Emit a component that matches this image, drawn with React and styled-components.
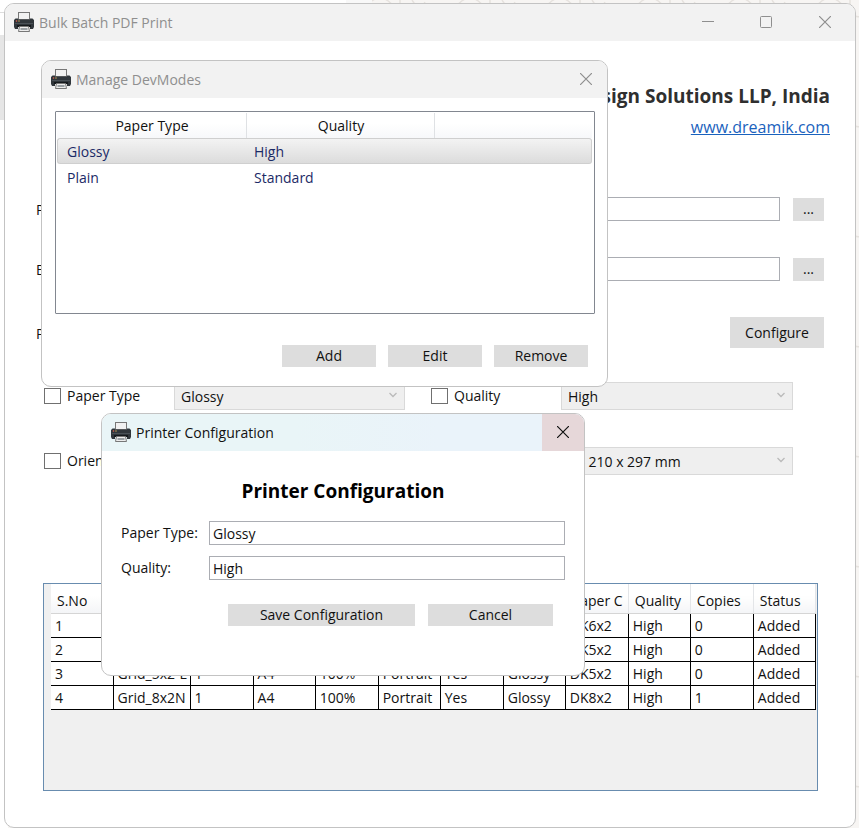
import React from 'react';
import styled, { createGlobalStyle, css } from 'styled-components';

const GlobalStyle = createGlobalStyle`
  * { box-sizing: border-box; }
  html, body, #root { height: 100%; }
  body {
    margin: 0;
    overflow: hidden;
    background: #f7f5f3;
    color: #111;
    font-family: "Segoe UI", "Open Sans", "Noto Sans", sans-serif;
    font-size: 14px;
    line-height: 20px;
  }
  button, input, select { font: inherit; color: inherit; margin: 0; }
`;

const Desktop = styled.div`
  position: relative;
  min-height: 100%;
  padding: 3px 3px 0 4px;
  display: flex;
`;

const Backdrop = styled.svg`
  position: absolute;
  inset: 0;
  width: 100%;
  height: 100%;
`;

const windowFrame = css`
  display: flex;
  flex-direction: column;
  background: #fff;
  border: 1px solid #c3c3c3;
  overflow: hidden;
`;

const MainWindow = styled.main`
  ${windowFrame}
  position: relative;
  flex: 1;
  border-radius: 10px;
`;

const Dialog = styled.section`
  ${windowFrame}
  position: absolute;
  left: ${p => p.$x}px;
  top: ${p => p.$y}px;
  width: ${p => p.$w}px;
  border-radius: 10px;
`;

const TitleBar = styled.header`
  display: flex;
  align-items: stretch;
  height: 37px;
  flex: none;
  padding-left: 9px;
  gap: 5px;
  color: ${p => (p.$active ? '#111' : '#8f8f8f')};
  background: ${p => (p.$active ? 'linear-gradient(90deg, #e9f5f7 40%, #eaf3fa 70%)' : '#f2f2f2')};
`;

const WindowTitle = styled.span`
  flex: 1;
  align-self: center;
  white-space: nowrap;
`;

const CaptionButton = styled.button`
  display: grid;
  place-items: center;
  width: ${p => p.$w || 42}px;
  padding: 0 0 2px;
  border: 0;
  background: ${p => (p.$hot ? '#e6d7d9' : 'transparent')};
`;

const PrinterSvg = styled.svg`
  align-self: center;
  flex: none;
  margin-bottom: 2px;
`;

const Content = styled.div`
  display: flex;
  flex-direction: column;
  flex: 1;
  padding: 41px 31px 36px 38px;
`;

const Masthead = styled.div`
  display: flex;
  flex-direction: column;
  align-items: flex-end;
  margin-right: -6px;
  padding-bottom: 53px;
`;

const Company = styled.h1`
  margin: 0;
  font-size: 19px;
  line-height: 28px;
  color: #2f2f2f;
`;

const SiteLink = styled.a`
  font-size: 16px;
  line-height: 34px;
  color: #1a62bd;
`;

const FileRow = styled.div`
  display: grid;
  grid-template-columns: 112px 1fr 31px;
  column-gap: 13px;
  align-items: center;
  height: 24px;
  margin-bottom: 36px;
  white-space: nowrap;
`;

const RowLabel = styled.label`
  margin-left: -7px;
  padding-top: 2px;
`;

const PrinterRow = styled.div`
  display: flex;
  justify-content: space-between;
  align-items: center;
  height: 31px;
  margin-bottom: 34px;
`;

const TextBox = styled.input`
  width: 100%;
  height: 24px;
  padding: 0 3px;
  border: 1px solid #abadb3;
  background: #fff;
`;

const Button = styled.button`
  min-width: ${p => p.$w}px;
  height: ${p => p.$h || 22}px;
  padding: 0;
  border: 0;
  line-height: 20px;
  background: #dddddd;
`;

const Options = styled.div`
  display: grid;
  grid-template-columns: 130px 231fr 26px 130px 232fr;
  row-gap: 37px;
  margin: 0 31px 108px 1px;
`;

const Check = styled.label`
  display: flex;
  align-items: center;
  gap: 6px;
  height: 28px;
  white-space: nowrap;
  grid-column: ${p => p.$col};

  input {
    appearance: none;
    width: 17px;
    height: 16px;
    border: 1px solid #707070;
    background: #fff;
  }
`;

const Combo = styled.span`
  display: grid;
  align-items: center;
  height: 28px;

  select, svg { grid-area: 1 / 1; }
  select {
    appearance: none;
    width: 100%;
    height: 28px;
    padding: 2px 24px 0 6px;
    border: 1px solid #d9d9d9;
    border-radius: 0;
    background: #efefef;
    opacity: 1;
  }
  svg { justify-self: end; margin: 0 8px 2px 0; pointer-events: none; }
`;

const GridFrame = styled.div`
  height: 208px;
  margin-right: 6px;
  padding: 0 1px 0 7px;
  border: 1px solid #688caf;
  background: #f0f0f0;
`;

const JobTable = styled.table`
  width: 100%;
  table-layout: fixed;
  border-collapse: collapse;
  background: #fff;
  white-space: nowrap;

  th {
    height: 29px;
    padding: 6px 0 0 6px;
    font-weight: 400;
    text-align: left;
    overflow: hidden;
    border-right: 1px solid #e3e5e8;
    border-bottom: 1px solid #d5d5d5;
    background: linear-gradient(#fff 40%, #f4f5f7);
  }
  td {
    height: 24px;
    padding: 2px 0 0 4px;
    overflow: hidden;
    border-right: 1px solid #000;
    border-bottom: 1px solid #000;
    line-height: 20px;
  }
`;

const DevBody = styled.div`
  display: flex;
  flex-direction: column;
  padding: 13px 12px 19px 13px;
`;

const DevList = styled.div`
  height: 203px;
  padding: 1px 2px 1px 1px;
  border: 1px solid #828790;
  border-radius: 1px;
`;

const DevTable = styled.table`
  width: 100%;
  table-layout: fixed;
  border-collapse: separate;
  border-spacing: 0;

  th {
    height: 25px;
    padding: 0 0 0 1px;
    font-weight: 400;
    border-right: 1px solid #dfe1e4;
    background: linear-gradient(#fff 40%, #f7f8fa);
  }
  th:last-child { border-right: 0; }
  td {
    height: 26px;
    padding: 1px 0 0 7px;
    color: #1b2a66;
  }
  td:first-child { padding-left: 9px; border-left: 1px solid transparent; }
`;

const DevRow = styled.tr`
  ${p => p.$selected && css`
    td {
      background: linear-gradient(#f3f3f3, #dcdcdc);
      border-top: 1px solid #cfcfcf;
      border-bottom: 1px solid #cfcfcf;
    }
    && td:first-child { border-left-color: #cfcfcf; border-radius: 3px 0 0 3px; }
    td:last-child { border-right: 1px solid #cfcfcf; border-radius: 0 3px 3px 0; }
  `}
`;

const DevActions = styled.div`
  display: flex;
  justify-content: flex-end;
  gap: 12px;
  margin: 31px 7px 0 0;
`;

const ConfigForm = styled.form`
  display: flex;
  flex-direction: column;
  padding: 26px 19px 49px;
`;

const FormTitle = styled.h2`
  margin: 0 0 16px;
  font-size: 19px;
  line-height: 28px;
  text-align: center;
  color: #000;
`;

const Field = styled.label`
  display: grid;
  grid-template-columns: 88px 1fr;
  align-items: center;
  margin-bottom: 11px;
`;

const FormActions = styled.div`
  display: flex;
  gap: 13px;
  margin: 13px 0 0 107px;
`;

function PrinterIcon() {
  return (
    <PrinterSvg width="20" height="20" viewBox="0 0 20 20" aria-hidden="true">
      <rect x="4.5" y="0.5" width="11" height="7" fill="#f1f1f1" stroke="#777" />
      <path d="M1.500 6.500H4v1h12v-1h2.500L20 8v7l-1 2h-3v-3.500H4V17H1l-1-2V8z" fill="#30363b" />
      <path d="M1 11.500h18" stroke="#4a5157" />
      <circle cx="2.500" cy="9" r="0.800" fill="#e2604f" />
      <circle cx="5" cy="9" r="0.700" fill="#d9b45a" />
      <rect x="3" y="13" width="14" height="2" fill="#15191c" />
      <path d="M5.500 14.500h9l1 5h-11z" fill="#ededed" stroke="#777" />
      <path d="M6.500 16h7v2h-7z" fill="#9aa0a4" />
    </PrinterSvg>
  );
}

function CloseIcon() {
  return (
    <svg width="12" height="12" viewBox="0 0 12 12" aria-hidden="true">
      <path d="M0 0 12 12M12 0 0 12" fill="none" stroke="currentColor" strokeWidth="1.200" />
    </svg>
  );
}

function Select({ label, value }) {
  return (
    <Combo>
      <select aria-label={label} defaultValue={value} disabled>
        <option>{value}</option>
      </select>
      <svg width="8" height="6" viewBox="0 0 8 6" aria-hidden="true">
        <path d="M0.500 1 4 4.500 7.500 1" fill="none" stroke="#bababa" strokeWidth="1.300" />
      </svg>
    </Combo>
  );
}

const columns = [
  ['S.No', 62], ['File Name', 77], ['Pages', 63], ['Size', 62], ['Scale', 63], ['Orient', 62],
  ['Fit', 63], ['Type', 62], ['Paper C', 63], ['Quality', 62], ['Copies', 63], ['Status', 62],
];

const jobs = [
  ['1', 'Grid_6x2', '1', 'A4', '100%', 'Portrait', 'Yes', 'Glossy', 'DK6x2', 'High', '0', 'Added'],
  ['2', 'Grid_5x2', '1', 'A4', '100%', 'Portrait', 'Yes', 'Glossy', 'DK5x2', 'High', '0', 'Added'],
  ['3', 'Grid_5x2-L', '1', 'A4', '100%', 'Portrait', 'Yes', 'Glossy', 'DK5x2', 'High', '0', 'Added'],
  ['4', 'Grid_8x2N', '1', 'A4', '100%', 'Portrait', 'Yes', 'Glossy', 'DK8x2', 'High', '1', 'Added'],
];

export default function App() {
  return (
    <Desktop>
      <GlobalStyle />
      <Backdrop aria-hidden="true">
        <defs>
          <pattern id="doodles" width="90" height="110" patternUnits="userSpaceOnUse">
            <path d="M5 8q15-20 30 0t30-6M40 0v10M52 0l6 9M70 20a12 12 0 1 1 18 10M74 60q10-14 20 2M80 85h14v12H78z" fill="none" stroke="#e6e2de" strokeWidth="1.500" />
          </pattern>
        </defs>
        <rect width="100%" height="100%" fill="url(#doodles)" />
        <rect width="372" height="12" fill="#f8f8f8" />
        <rect width="346" height="12" fill="#fff" />
        <rect width="8" height="100%" fill="#fff" />
        <rect y="35" width="8" height="85" fill="#e6e6e6" />
        <path d="M0 12.500h8" stroke="#ddd" />
      </Backdrop>

      <MainWindow>
        <TitleBar>
          <PrinterIcon />
          <WindowTitle>Bulk Batch PDF Print</WindowTitle>
          <CaptionButton $w={58} aria-label="Minimize">
            <svg width="12" height="12" viewBox="0 0 12 12"><path d="M0 5.500h12" stroke="currentColor" /></svg>
          </CaptionButton>
          <CaptionButton $w={48} aria-label="Maximize">
            <svg width="12" height="12" viewBox="0 0 12 12"><rect x="0.500" y="0.500" width="11" height="11" rx="1" fill="none" stroke="currentColor" /></svg>
          </CaptionButton>
          <CaptionButton $w={60} aria-label="Close"><CloseIcon /></CaptionButton>
        </TitleBar>

        <Content>
          <Masthead>
            <Company>Design Solutions LLP, India</Company>
            <SiteLink href="#site">www.dreamik.com</SiteLink>
          </Masthead>
          <FileRow>
            <RowLabel htmlFor="pdf-folder">PDF Folder</RowLabel>
            <TextBox id="pdf-folder" />
            <Button $w={31} $h={23} aria-label="Browse PDF folder">...</Button>
          </FileRow>
          <FileRow>
            <RowLabel htmlFor="batch-file">Batch File</RowLabel>
            <TextBox id="batch-file" />
            <Button $w={31} $h={23} aria-label="Browse batch file">...</Button>
          </FileRow>
          <PrinterRow>
            <RowLabel as="span">Printer</RowLabel>
            <Button $w={94} $h={31}>Configure</Button>
          </PrinterRow>
          <Options>
            <Check $col={1}><input type="checkbox" />Paper Type</Check>
            <Select label="Paper type" value="Glossy" />
            <Check $col={4}><input type="checkbox" />Quality</Check>
            <Select label="Quality" value="High" />
            <Check $col={1}><input type="checkbox" />Orientation</Check>
            <Select label="Orientation" value="Portrait" />
            <Check $col={4}><input type="checkbox" />Paper Size</Check>
            <Select label="Paper size" value="A4 210 x 297 mm" />
          </Options>
          <GridFrame>
            <JobTable>
              <colgroup>
                {columns.map(([name, width]) => <col key={name} width={width} />)}
              </colgroup>
              <thead>
                <tr>{columns.map(([name]) => <th key={name} scope="col">{name}</th>)}</tr>
              </thead>
              <tbody>
                {jobs.map(job => (
                  <tr key={job[0]}>{job.map((value, i) => <td key={columns[i][0]}>{value}</td>)}</tr>
                ))}
              </tbody>
            </JobTable>
          </GridFrame>
        </Content>
      </MainWindow>

      <Dialog $x={41} $y={60} $w={567} role="dialog" aria-label="Manage DevModes">
        <TitleBar>
          <PrinterIcon />
          <WindowTitle>Manage DevModes</WindowTitle>
          <CaptionButton aria-label="Close"><CloseIcon /></CaptionButton>
        </TitleBar>
        <DevBody>
          <DevList>
            <DevTable>
              <colgroup><col width="190" /><col width="188" /><col /></colgroup>
              <thead>
                <tr><th scope="col">Paper Type</th><th scope="col">Quality</th><th /></tr>
              </thead>
              <tbody>
                <DevRow $selected><td>Glossy</td><td>High</td><td /></DevRow>
                <DevRow><td>Plain</td><td>Standard</td><td /></DevRow>
              </tbody>
            </DevTable>
          </DevList>
          <DevActions>
            <Button $w={94}>Add</Button>
            <Button $w={94}>Edit</Button>
            <Button $w={94}>Remove</Button>
          </DevActions>
        </DevBody>
      </Dialog>

      <Dialog $x={101} $y={413} $w={484} role="dialog" aria-label="Printer Configuration">
        <TitleBar $active>
          <PrinterIcon />
          <WindowTitle>Printer Configuration</WindowTitle>
          <CaptionButton $hot aria-label="Close"><CloseIcon /></CaptionButton>
        </TitleBar>
        <ConfigForm>
          <FormTitle>Printer Configuration</FormTitle>
          <Field>Paper Type:<TextBox defaultValue="Glossy" /></Field>
          <Field>Quality:<TextBox defaultValue="High" /></Field>
          <FormActions>
            <Button $w={187} type="button">Save Configuration</Button>
            <Button $w={125} type="button">Cancel</Button>
          </FormActions>
        </ConfigForm>
      </Dialog>
    </Desktop>
  );
}
